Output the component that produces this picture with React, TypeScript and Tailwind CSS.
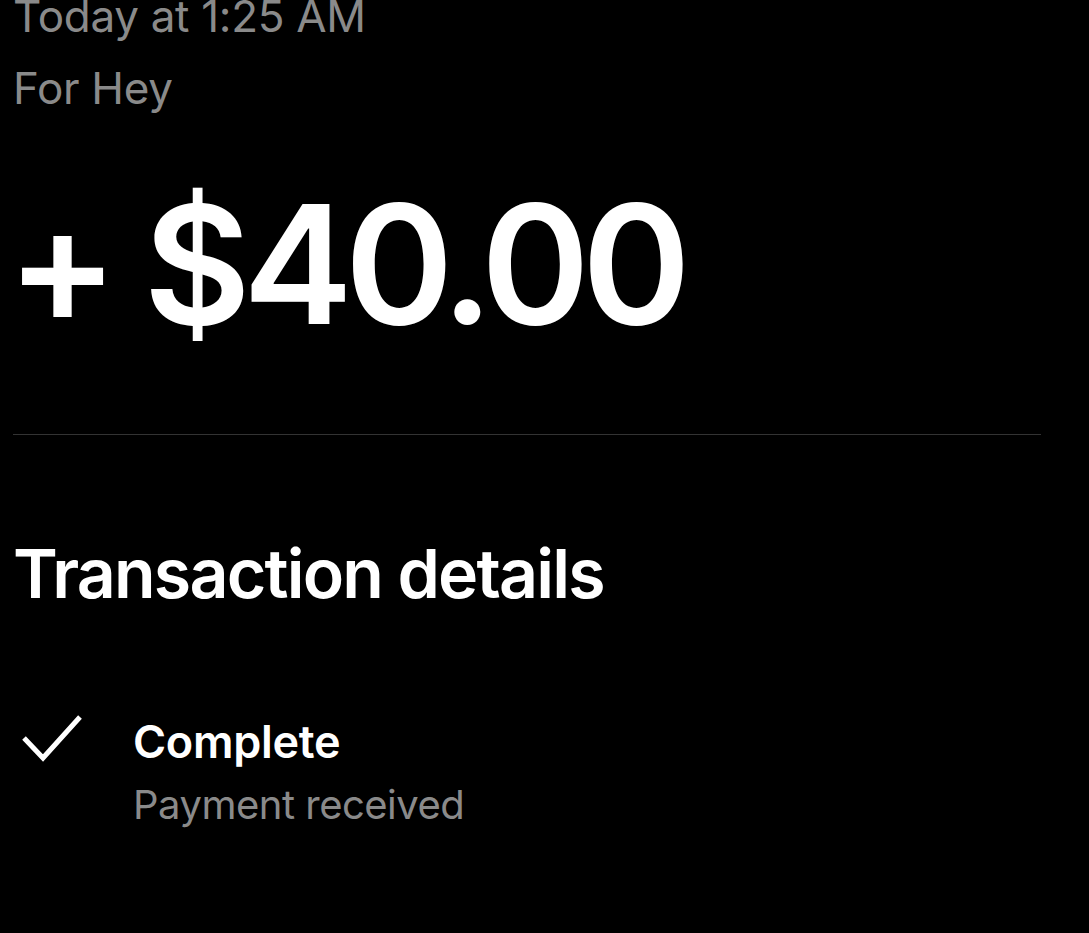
export default function App() {
  return (
    <div
      className="min-h-[933px] w-full overflow-hidden bg-black text-white"
      style={{ fontFamily: "Inter, 'Noto Sans', sans-serif" }}
    >
      <div className="px-[13px]">
        <div className="-mt-[20px] text-[44px] leading-[72px] text-[#8a8a8a] tracking-[-0.3px]">
          <p>Today at 1:25 AM</p>
          <p>For Hey</p>
        </div>

        <h1 className="-ml-[6px] mt-[50px] text-[165px] font-semibold leading-[180px] tracking-[-8px]">
          + $40.00
        </h1>

        <div className="mt-[80px] mr-[35px] h-px bg-[#333333]" />

        <h2 className="mt-[98px] text-[68px] font-semibold leading-[80px] tracking-[-1.8px]">
          Transaction details
        </h2>

        <div className="mt-[98px] flex items-start">
          <div className="w-[120px] pl-[8px] pt-[2px]">
            <svg width="64" height="52" viewBox="0 0 64 52" fill="none">
              <path
                d="M3 25 L22 45 L59 4"
                stroke="white"
                strokeWidth="5"
                strokeLinecap="butt"
                strokeLinejoin="miter"
              />
            </svg>
          </div>
          <div className="flex flex-col">
            <span className="text-[45px] font-semibold leading-[62px] tracking-[-0.3px]">
              Complete
            </span>
            <span className="text-[40px] leading-[64px] text-[#8a8a8a] tracking-[-0.5px]">
              Payment received
            </span>
          </div>
        </div>
      </div>
    </div>
  );
}
